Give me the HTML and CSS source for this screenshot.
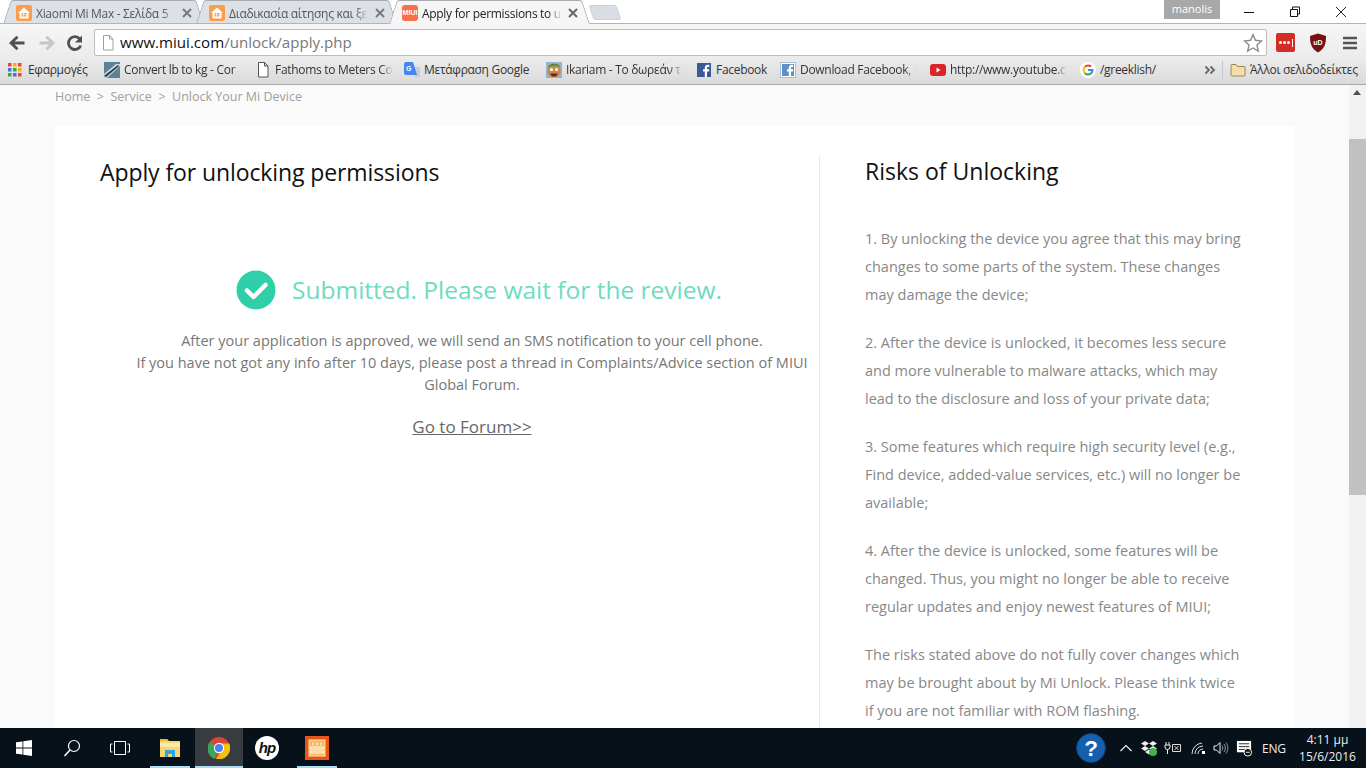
FILE: index.html
```html
<!DOCTYPE html>
<html lang="en">
<head>
<meta charset="utf-8">
<title>Apply for permissions to unlock</title>
<link rel="stylesheet" href="styles.css">
</head>
<body>
<div class="window">
  <header class="titlebar">
    <div class="tabs">
      <div class="tab tab-bg">
        <svg class="fav" viewBox="0 0 16 16"><rect width="16" height="16" rx="2" fill="#fb9d4b"/><path d="M8 2.500 2 8h1.500v5.500h9V8H14z" fill="#fff"/><path d="M5.500 8h5v3.500h-5z" fill="#fb9d4b"/><path d="M7.500 8v3.500M5.500 9.700h5" stroke="#fff" stroke-width=".6"/></svg>
        <span class="tab-title">Xiaomi Mi Max - Σελίδα 5</span>
        <svg class="tab-close" viewBox="0 0 10 10"><path d="M1 1l8 8M9 1l-8 8" stroke="#7a7a7a" stroke-width="2" fill="none"/></svg>
      </div>
      <div class="tab tab-bg">
        <svg class="fav" viewBox="0 0 16 16"><rect width="16" height="16" rx="2" fill="#fb9d4b"/><path d="M8 2.500 2 8h1.500v5.500h9V8H14z" fill="#fff"/><path d="M5.500 8h5v3.500h-5z" fill="#fb9d4b"/><path d="M7.500 8v3.500M5.500 9.700h5" stroke="#fff" stroke-width=".6"/></svg>
        <span class="tab-title">Διαδικασία αίτησης και ξε</span>
        <svg class="tab-close" viewBox="0 0 10 10"><path d="M1 1l8 8M9 1l-8 8" stroke="#7a7a7a" stroke-width="2" fill="none"/></svg>
      </div>
      <div class="tab tab-active">
        <span class="fav fav-miui">MIUI</span>
        <span class="tab-title">Apply for permissions to u</span>
        <svg class="tab-close" viewBox="0 0 10 10"><path d="M1 1l8 8M9 1l-8 8" stroke="#666" stroke-width="2" fill="none"/></svg>
      </div>
      <div class="newtab"></div>
    </div>
    <div class="winctl">
      <span class="user">manolis</span>
      <svg class="winbtn" viewBox="0 0 46 24"><path d="M18 12.500h10" stroke="#111" fill="none"/></svg>
      <svg class="winbtn" viewBox="0 0 46 24"><path d="M18.500 9.500h7v7h-7zM20.500 9.500v-2.500h7v7h-2" stroke="#111" fill="none"/></svg>
      <svg class="winbtn" viewBox="0 0 46 24"><path d="M18 7l10 10M28 7l-10 10" stroke="#222" fill="none"/></svg>
    </div>
  </header>

  <nav class="toolbar">
    <svg class="navbtn" viewBox="0 0 20 20"><path d="M17.500 10H5M10.500 3.800 4 10l6.500 6.200" stroke="#505050" stroke-width="2.800" fill="none"/></svg>
    <svg class="navbtn navbtn-fwd" viewBox="0 0 20 20"><path d="M2.500 10H15M9.500 3.800 16 10l-6.500 6.200" stroke="#c6c6c6" stroke-width="2.800" fill="none"/></svg>
    <svg class="navbtn" viewBox="0 0 20 20"><path d="M15.800 12.500A6.400 6.400 0 1 1 14.800 6" stroke="#505050" stroke-width="2.800" fill="none"/><path d="M17 2.500v7h-7z" fill="#505050"/></svg>
    <div class="omnibox">
      <svg class="pageicon" viewBox="0 0 12 16"><path d="M1.500 .5h6l3.500 3.500v11H1.500zM7.500 .5v3.500H11" fill="#fff" stroke="#a0a0a0"/></svg>
      <span class="url"><span class="url-host">www.miui.com</span>/unlock/apply.php</span>
      <svg class="star" viewBox="0 0 20 20"><path d="M10 1.800l2.500 5.500 6 .7-4.500 4 1.300 6L10 15l-5.300 3 1.300-6-4.500-4 6-.7z" fill="#fff" stroke="#8c8c8c" stroke-width="1.400"/></svg>
    </div>
    <div class="ext">
      <span class="ext-lastpass"><i></i><i></i><i></i><b></b></span>
      <svg class="ext-ublock" viewBox="0 0 18 20"><path d="M9 .5 17 3c0 8-1.500 13-8 16.500C2.500 16 1 11 1 3z" fill="#7a0f12"/><text x="9" y="11.500" class="ub-text" text-anchor="middle">uD</text></svg>
      <svg class="ext-menu" viewBox="0 0 14 14"><path d="M0 2h14M0 7h14M0 12h14" stroke="#555" stroke-width="2.500"/></svg>
    </div>
  </nav>

  <nav class="bookmarks">
    <div class="bm bm-apps">
      <svg class="bm-ico" viewBox="0 0 16 16"><g><rect y="1" width="3.500" height="3.500" fill="#e8453c"/><rect x="5" y="1" width="3.500" height="3.500" fill="#f4b400"/><rect x="10" y="1" width="3.500" height="3.500" fill="#e8453c"/><rect y="6" width="3.500" height="3.500" fill="#3c78d8"/><rect x="5" y="6" width="3.500" height="3.500" fill="#34a853"/><rect x="10" y="6" width="3.500" height="3.500" fill="#f4b400"/><rect y="11" width="3.500" height="3.500" fill="#34a853"/><rect x="5" y="11" width="3.500" height="3.500" fill="#3c78d8"/><rect x="10" y="11" width="3.500" height="3.500" fill="#e8453c"/></g></svg>
      <span class="bm-text">Εφαρμογές</span>
    </div>
    <div class="bm bm-convert">
      <svg class="bm-ico" viewBox="0 0 16 16"><rect width="16" height="16" fill="#5f8196"/><path d="M0 12 12 2h4v2L3 16H0z" fill="#c9d8e0"/><path d="M0 14 14 3l1 1L2 15z" fill="#1f3442"/></svg>
      <span class="bm-text bm-fade">Convert lb to kg - Cor</span>
    </div>
    <div class="bm bm-fathoms">
      <svg class="bm-ico" viewBox="0 0 12 16"><path d="M1.500 .5h6l3.500 3.500v11H1.500zM7.500 .5v3.500H11" fill="#fff" stroke="#555"/></svg>
      <span class="bm-text bm-fade">Fathoms to Meters Co</span>
    </div>
    <div class="bm bm-translate">
      <svg class="bm-ico" viewBox="0 0 16 16"><path d="M9 5h7v10l-5 1z" fill="#c9ccd1"/><path d="M2 0h7l4 13H2a2 2 0 0 1-2-2V2a2 2 0 0 1 2-2z" fill="#4285f4"/><text x="4.800" y="9" class="gt-text" text-anchor="middle">G</text></svg>
      <span class="bm-text">Μετάφραση Google</span>
    </div>
    <div class="bm bm-ikariam">
      <svg class="bm-ico" viewBox="0 0 16 16"><rect width="16" height="16" fill="#8db6d8"/><path d="M2 6C2 1 13 0 14 5l1 5-3 5H4L1 10z" fill="#c98a4f"/><path d="M2 6C2 1 13 0 14 5 10 3 6 3 2 6z" fill="#3f8f3a"/><circle cx="5.500" cy="7.500" r="1.500" fill="#fff"/><circle cx="10.500" cy="7.500" r="1.500" fill="#fff"/><path d="M4 11.500h8l-2 3H6z" fill="#6a2a1a"/></svg>
      <span class="bm-text bm-fade">Ikariam - Το δωρεάν τ</span>
    </div>
    <div class="bm bm-fb1">
      <svg class="bm-ico" viewBox="0 0 16 16"><rect x="1" y="1" width="14" height="14" fill="#3b5998"/><path d="M11 15V9.500h2l.3-2.300H11V6c0-.7.200-1.100 1.100-1.100h1.200V2.800C13 2.700 12.400 2.700 11.700 2.700 10 2.700 8.800 3.700 8.800 5.600v1.600H7v2.300h1.800V15z" fill="#fff"/></svg>
      <span class="bm-text">Facebook</span>
    </div>
    <div class="bm bm-fb2">
      <svg class="bm-ico" viewBox="0 0 16 16"><rect x=".5" y=".5" width="15" height="15" fill="#fff" stroke="#9fc3de"/><rect x="2" y="2" width="12" height="12" fill="#5f90c4"/><path d="M11 14V9.500h2l.3-2.300H11V6c0-.7.200-1.100 1.100-1.100h1V2.800C12.800 2.700 12.400 2.700 11.700 2.700 10 2.700 8.800 3.700 8.800 5.600v1.600H7v2.300h1.800V14z" fill="#fff"/></svg>
      <span class="bm-text bm-fade">Download Facebook, Y</span>
    </div>
    <div class="bm bm-yt">
      <svg class="bm-ico" viewBox="0 0 16 16"><rect y="2" width="16" height="12" rx="3" fill="#d9252a"/><path d="M6.500 5.500v5l4-2.500z" fill="#fff"/></svg>
      <span class="bm-text bm-fade">http://www.youtube.c</span>
    </div>
    <div class="bm bm-g">
      <svg class="bm-ico" viewBox="0 0 16 16"><circle cx="8" cy="8" r="8" fill="#fff"/><path d="M4.900 4.800A4.500 4.500 0 0 1 11 4.700" stroke="#ea4335" stroke-width="2" fill="none"/><path d="M4.900 4.800a4.500 4.500 0 0 0 0 6.400" stroke="#fbbc05" stroke-width="2" fill="none"/><path d="M4.900 11.200a4.500 4.500 0 0 0 6.500-.2" stroke="#34a853" stroke-width="2" fill="none"/><path d="M8 8h4.500a4.500 4.500 0 0 1-1.100 3" stroke="#4285f4" stroke-width="2" fill="none"/></svg>
      <span class="bm-text">/greeklish/</span>
    </div>
    <svg class="bm-more" viewBox="0 0 12 10"><path d="M1.500 1.500 5 5 1.500 8.500M6.500 1.500 10 5 6.500 8.500" stroke="#666" stroke-width="1.800" fill="none"/></svg>
    <span class="bm-sep"></span>
    <div class="bm bm-other">
      <svg class="bm-ico" viewBox="0 0 16 16"><path d="M1 3.500A1 1 0 0 1 2 2.500h4l1.500 2H14a1 1 0 0 1 1 1V13a1 1 0 0 1-1 1H2a1 1 0 0 1-1-1z" fill="#f6dfa6" stroke="#9c8455"/></svg>
      <span class="bm-text">Άλλοι σελιδοδείκτες</span>
    </div>
  </nav>

  <div class="viewport">
    <main class="page">
      <p class="crumbs"><a>Home</a><span class="gt">&gt;</span><a>Service</a><span class="gt">&gt;</span><a>Unlock Your Mi Device</a></p>
      <section class="card">
        <div class="col-left">
          <h1 class="h-left">Apply for unlocking permissions</h1>
          <div class="result">
            <div class="status">
              <svg class="check" viewBox="0 0 40 40"><circle cx="20" cy="20" r="19.500" fill="#31cfa9"/><path d="M11 20.500l6.500 6.500L29.500 15" stroke="#fff" stroke-width="4.500" fill="none" stroke-linecap="round" stroke-linejoin="round"/></svg>
              <span class="status-text">Submitted. Please wait for the review.</span>
            </div>
            <p class="notice">After your application is approved, we will send an SMS notification to your cell phone.<br>If you have not got any info after 10 days, please post a thread in Complaints/Advice section of MIUI<br>Global Forum.</p>
            <a class="forum">Go to Forum&gt;&gt;</a>
          </div>
        </div>
        <aside class="col-right">
          <h2 class="h-right">Risks of Unlocking</h2>
          <p class="risk">1. By unlocking the device you agree that this may bring<br>changes to some parts of the system. These changes<br>may damage the device;</p>
          <p class="risk">2. After the device is unlocked, it becomes less secure<br>and more vulnerable to malware attacks, which may<br>lead to the disclosure and loss of your private data;</p>
          <p class="risk">3. Some features which require high security level (e.g.,<br>Find device, added-value services, etc.) will no longer be<br>available;</p>
          <p class="risk">4. After the device is unlocked, some features will be<br>changed. Thus, you might no longer be able to receive<br>regular updates and enjoy newest features of MIUI;</p>
          <p class="risk">The risks stated above do not fully cover changes which<br>may be brought about by Mi Unlock. Please think twice<br>if you are not familiar with ROM flashing.</p>
        </aside>
      </section>
    </main>
    <div class="scrollbar">
      <span class="sb-up"></span>
      <span class="sb-thumb"></span>
    </div>
  </div>

  <footer class="taskbar">
    <div class="tb-left">
      <div class="tb-btn tb-start"><svg class="tb-ico-start" viewBox="0 0 16 16"><path d="M0 2.300 6.500 1.400v6.200H0zM7.300 1.300 16 0v7.600H7.300zM0 8.400h6.500v6.200L0 13.700zM7.300 8.400H16V16L7.300 14.700z" fill="#fff"/></svg></div>
      <div class="tb-btn tb-search"><svg class="tb-ico-md" viewBox="0 0 18 18"><circle cx="11" cy="7" r="5.500" stroke="#fff" stroke-width="1.200" fill="none"/><path d="M7 11 1.500 17" stroke="#fff" stroke-width="1.600"/></svg></div>
      <div class="tb-btn tb-view"><svg class="tb-ico-view" viewBox="0 0 20 14"><path d="M4.500 .5h11v13h-11zM2.500 3H.5v8h2M17.500 3h2v8h-2" stroke="#fff" fill="none"/></svg></div>
      <div class="tb-btn tb-app tb-explorer tb-open"><svg class="tb-ico-exp" viewBox="0 0 22 20"><path d="M1 1h7l2 2h11v16H1z" fill="#f6d572"/><path d="M1 1h7l1 2H1z" fill="#e8b93c"/><path d="M1 5h20v4H1z" fill="#fbe9a9"/><path d="M6 19v-7h10v7h-3v-3h-4v3z" fill="#29a8e0"/></svg></div>
      <div class="tb-btn tb-app tb-chrome tb-active"><svg class="tb-ico-chrome" viewBox="0 0 24 24"><circle cx="12" cy="12" r="12" fill="#db4437"/><path d="M12 12 7 24A12 12 0 0 1 2 5.500z" fill="#3aa757"/><path d="M12 7h11A12 12 0 0 1 9 23.700l5-8z" fill="#f4c20d"/><circle cx="12" cy="12" r="5.600" fill="#fff"/><circle cx="12" cy="12" r="4.400" fill="#4d83ee"/></svg></div>
      <div class="tb-btn tb-app"><svg class="tb-ico-app" viewBox="0 0 24 24"><circle cx="12" cy="12" r="12" fill="#fff"/><text x="12" y="17" class="hp-text" text-anchor="middle">hp</text></svg></div>
      <div class="tb-btn tb-app tb-last tb-open"><svg class="tb-ico-app" viewBox="0 0 24 24"><rect width="24" height="24" fill="#e9541b"/><rect x="4" y="4" width="16" height="16" fill="#f5b95c" stroke="#ffe6b3"/><path d="M5.500 11h13v2h-13zM5.500 15h13v2h-13zM8 6.500v3M12 6.500v3M16 6.500v3" stroke="#fff" fill="none"/></svg></div>
    </div>
    <div class="tray">
      <svg class="tray-help" viewBox="0 0 32 32"><circle cx="16" cy="16" r="15.500" fill="#1560ae" stroke="#0c3c70"/><text x="16" y="25" class="help-text" text-anchor="middle">?</text></svg>
      <svg class="tray-ico tray-chev" viewBox="0 0 14 14"><path d="M1.500 10 7 4.500l5.500 5.500" stroke="#eee" stroke-width="1.200" fill="none"/></svg>
      <svg class="tray-ico tray-dbx" viewBox="0 0 16 16"><path d="M4 1 0 3.500 4 6 8 3.500zM12 1 8 3.500 12 6l4-2.500zM4 6 0 8.500 4 11l4-2.500zM12 6 8 8.500l4 2.500 4-2.500zM8 9.500 4 12l4 2.500 4-2.500z" fill="#eee"/><circle cx="12" cy="12" r="4" fill="#3fb54a"/></svg>
      <svg class="tray-ico tray-pwr" viewBox="0 0 18 14"><path d="M2 1v3M5 1v3M1 4h5v2a2.500 2.500 0 0 1-5 0zM3.500 8.500V13" stroke="#eee" fill="none"/><path d="M8.500 3.500h8v7h-8zM10.500 5l4 4M14.500 5l-4 4" stroke="#ddd" fill="none"/></svg>
      <svg class="tray-ico tray-wifi" viewBox="0 0 16 14"><path d="M1 13A11 11 0 0 1 11 2M4 13a8 8 0 0 1 8-8M7 13a5 5 0 0 1 5-5" stroke="#ddd" fill="none"/><rect x="11" y="10" width="3" height="3" fill="#fff"/></svg>
      <svg class="tray-ico tray-vol" viewBox="0 0 16 14"><path d="M1 5h2.500L7 1.500v11L3.500 9H1z" stroke="#eee" fill="none"/><path d="M9 4.500c1 1.500 1 3.500 0 5M11 3c1.800 2.500 1.800 5.500 0 8M13 1.500c2.400 3.500 2.400 7.500 0 11" stroke="#999" fill="none"/></svg>
      <svg class="tray-ico tray-note" viewBox="0 0 18 18"><path d="M1 1h15v12H1z" fill="#fff"/><path d="M3 4h11M3 7h11M3 10h7" stroke="#222"/><circle cx="12.500" cy="13" r="4" fill="#111" stroke="#fff"/><path d="M10.500 13h4" stroke="#fff"/></svg>
      <span class="tray-lang">ENG</span>
      <div class="clock"><span>4:11 μμ</span><span>15/6/2016</span></div>
    </div>
  </footer>
</div>
</body>
</html>
```
FILE: styles.css
```css
* { box-sizing: border-box; }
html, body { margin: 0; height: 100%; overflow: hidden; }
body { font-family: "Open Sans", "Noto Sans", sans-serif; color: #333; }
.window { width: 1366px; height: 768px; display: flex; flex-direction: column; overflow: hidden; }

/* title bar */
.titlebar { height: 24px; background: #fff; display: flex; justify-content: space-between; flex: none; border-bottom: 1px solid #b4b4b4; position: relative; z-index: 2; }
.tabs { display: flex; align-items: flex-start; padding-left: 7px; height: 24px; }
.tab { position: relative; width: 193px; height: 23px; display: flex; align-items: center; padding: 3px 8px 0 9px; z-index: 1; font: 12px "Open Sans", sans-serif; letter-spacing: -.3px; color: #555; }
.tab::before, .tab::after { content: ""; position: absolute; top: 0; bottom: 0; width: 60%; background: #dce1e8; border: 1px solid #a9abae; border-bottom: 0; z-index: -1; }
.tab::before { left: 0; border-right: 0; border-radius: 3px 0 0 0; transform: skewX(-18deg); }
.tab::after { right: 0; border-left: 0; border-radius: 0 3px 0 0; transform: skewX(18deg); }
.tab-active { z-index: 2; color: #222; height: 24px; padding-bottom: 1px; }
.tab-active::before, .tab-active::after { background: #f6f6f6; }
.fav { width: 16px; height: 16px; flex: none; display: block; }
.fav-miui { background: #f5704b; border-radius: 3px; color: #fff; font: 700 7px/16px "Liberation Sans", sans-serif; letter-spacing: 0; text-align: center; }
.tab-title { flex: 1; min-width: 0; margin-left: 4px; white-space: nowrap; overflow: hidden; -webkit-mask-image: linear-gradient(90deg, #000 90%, transparent); mask-image: linear-gradient(90deg, #000 90%, transparent); }
.tab-close { flex: none; width: 10px; height: 10px; margin-left: 6px; }
.newtab { width: 28px; height: 15px; margin: 5px 0 0 5px; background: #d9dee5; border: 1px solid #ccd0d5; border-radius: 3px; transform: skewX(18deg); }
.winctl { display: flex; align-items: flex-start; margin-right: 2px; }
.user { width: 56px; height: 19px; margin-right: 6px; background: #a8a8a8; color: #fff; font: 11px/18px "Open Sans", sans-serif; text-align: center; }
.winbtn { width: 46px; height: 24px; display: block; }

/* toolbar */
.toolbar { height: 33px; flex: none; display: flex; align-items: center; padding: 5px 0 1px 7px; background: linear-gradient(#f6f6f6, #ececec); }
.navbtn { width: 20px; height: 20px; margin-right: 9px; flex: none; }
.navbtn-fwd { position: relative; left: 1px; }
.omnibox { width: 1173px; height: 27px; display: flex; align-items: center; padding: 0 3px 0 7px; background: #fff; border: 1px solid #bcbcbc; border-radius: 2px; }
.pageicon { width: 12px; height: 16px; flex: none; }
.url { flex: 1; margin-left: 6px; font: 15.1px/20px "Open Sans", sans-serif; padding-bottom: 1px; color: #777; }
.url-host { color: #111; }
.star { width: 20px; height: 20px; flex: none; }
.ext { display: flex; align-items: center; margin-left: 9px; }
.ext-lastpass { width: 19px; height: 19px; display: flex; align-items: center; justify-content: center; gap: 1px; background: #d32d27; border-radius: 2px; }
.ext-lastpass i { width: 3px; height: 3px; border-radius: 50%; background: #fff; }
.ext-lastpass b { width: 1px; height: 8px; margin-left: 1px; background: #fff; }
.ext-ublock { width: 18px; height: 20px; margin-left: 14px; }
.ub-text { font: 700 7px "Liberation Sans", sans-serif; fill: #fff; }
.gt-text { font: 700 7px "Liberation Sans", sans-serif; fill: #fff; }
.ext-menu { width: 14px; height: 14px; margin-left: 16px; }

/* bookmarks */
.bookmarks { height: 28px; flex: none; display: flex; align-items: center; padding: 0 0 1px 8px; background: linear-gradient(#ececec, #dadada); border-bottom: 1px solid #a9a9a9; font: 12px "Open Sans", sans-serif; color: #333; }
.bm { display: flex; align-items: center; flex: none; overflow: hidden; }
.bm-ico { width: 16px; height: 16px; flex: none; }
.bm-text { margin-left: 4px; white-space: nowrap; overflow: hidden; flex: 1; letter-spacing: -.3px; padding-bottom: 1px; }
.bm-fade { -webkit-mask-image: linear-gradient(90deg, #000 90%, transparent); mask-image: linear-gradient(90deg, #000 90%, transparent); }
.bm-apps { width: 96px; }
.bm-convert { width: 140px; margin-right: 11px; }
.bm-fathoms { width: 138px; margin-right: 11px; }
.bm-translate { width: 142px; }
.bm-ikariam { width: 136px; margin-right: 14px; }
.bm-fb1 { width: 84px; }
.bm-fb2 { width: 136px; margin-right: 14px; }
.bm-yt { width: 137px; margin-right: 13px; }
.bm-g { width: 124px; }
.bm-more { width: 12px; height: 10px; flex: none; }
.bm-sep { width: 1px; height: 18px; margin: 0 7px 0 6px; background: #c4c8cc; }
.bm-other { width: 132px; }

/* viewport */
.viewport { flex: 1; min-height: 0; display: flex; }
.page { flex: 1; min-width: 0; background: #fafafa; padding: 0 54px 0 55px; overflow: hidden; }
.crumbs { margin: 0; height: 41px; padding-top: 3px; font-size: 12.5px; line-height: 18px; color: #a0a0a0; }
.gt { margin: 0 6.500px; }
.card { display: flex; background: #fff; padding: 30px 0 0; min-height: 700px; }
.col-left { width: 765px; padding: 0 5px 0 45px; border-right: 1px solid #e7e7e7; }
.h-left { margin: 0; height: 114px; font-size: 23px; font-weight: 400; line-height: 32px; letter-spacing: -.1px; color: #111; }
.result { margin-left: 30px; text-align: center; }
.status { display: flex; align-items: center; justify-content: center; height: 40px; margin: 0 0 20px 14px; }
.check { width: 40px; height: 40px; flex: none; margin-right: 16px; }
.status-text { font-size: 24.500px; color: #6ddcbf; line-height: 39px; padding-bottom: 1px; }
.notice { margin: 0 0 19px; font-size: 14.500px; line-height: 22px; color: #777; }
.forum { font-size: 17px; line-height: 24px; color: #666; text-decoration: underline; }
.col-right { flex: 1; padding: 0 40px 0 45px; }
.h-right { margin: 0 0 39px; font-size: 23px; font-weight: 400; line-height: 30px; color: #111; }
.risk { margin: 0 0 20px; font-size: 14.500px; line-height: 28px; color: #888; }

/* scrollbar */
.scrollbar { width: 17px; flex: none; position: relative; background: #f1f1f1; }
.sb-up { position: absolute; left: 4px; top: 5px; width: 0; height: 0; border: 4px solid transparent; border-top: 0; border-bottom: 5px solid #505050; }
.sb-thumb { position: absolute; left: 0; right: 0; top: 54px; height: 356px; background: #c1c1c1; }

/* taskbar */
.taskbar { height: 40px; flex: none; display: flex; justify-content: space-between; background: #07111a; color: #fff; }
.tb-left { display: flex; }
.tb-btn { height: 40px; display: flex; align-items: center; justify-content: center; flex: none; position: relative; }
.tb-start { width: 48px; }
.tb-search { width: 48px; }
.tb-view { width: 48px; }
.tb-app { width: 48px; }
.tb-explorer { margin-left: 2px; }
.tb-chrome { margin-left: 1px; }
.tb-last { margin-left: 2px; }
.tb-active { background: #383c3e; }
.tb-open::after { content: ""; position: absolute; left: 4px; right: 4px; bottom: 0; height: 2px; background: #a9dcf7; }
.tb-active::after { content: ""; position: absolute; left: 0; right: 0; bottom: 0; height: 2px; background: #a9dcf7; }
.tb-ico-start { width: 16px; height: 16px; }
.tb-ico-md { width: 18px; height: 18px; }
.tb-ico-view { width: 20px; height: 14px; }
.tb-ico-app { width: 24px; height: 24px; }
.tb-ico-exp { width: 22px; height: 20px; }
.tb-ico-chrome { width: 22px; height: 22px; }
.hp-text { font: italic 700 15px "Liberation Sans", sans-serif; fill: #111; letter-spacing: -1px; }
.tray { display: flex; align-items: center; }
.tray-help { width: 30px; height: 30px; margin-right: 13px; }
.help-text { font: 700 24px "Liberation Sans", sans-serif; fill: #fff; }
.tray-ico { flex: none; }
.tray-chev { width: 14px; height: 14px; margin-right: 8px; }
.tray-dbx { width: 16px; height: 16px; margin-right: 7px; }
.tray-pwr { width: 18px; height: 14px; margin-right: 9px; }
.tray-wifi { width: 16px; height: 14px; margin-right: 6px; }
.tray-vol { width: 16px; height: 14px; margin-right: 7px; }
.tray-note { width: 17px; height: 17px; margin-right: 9px; }
.tray-lang { width: 25px; font: 12px "Open Sans", sans-serif; letter-spacing: -.2px; color: #eee; }
.clock { width: 79px; padding: 0 12px 0 14px; display: flex; flex-direction: column; align-items: center; font: 12px/17px "Open Sans", sans-serif; color: #eee; }
```
